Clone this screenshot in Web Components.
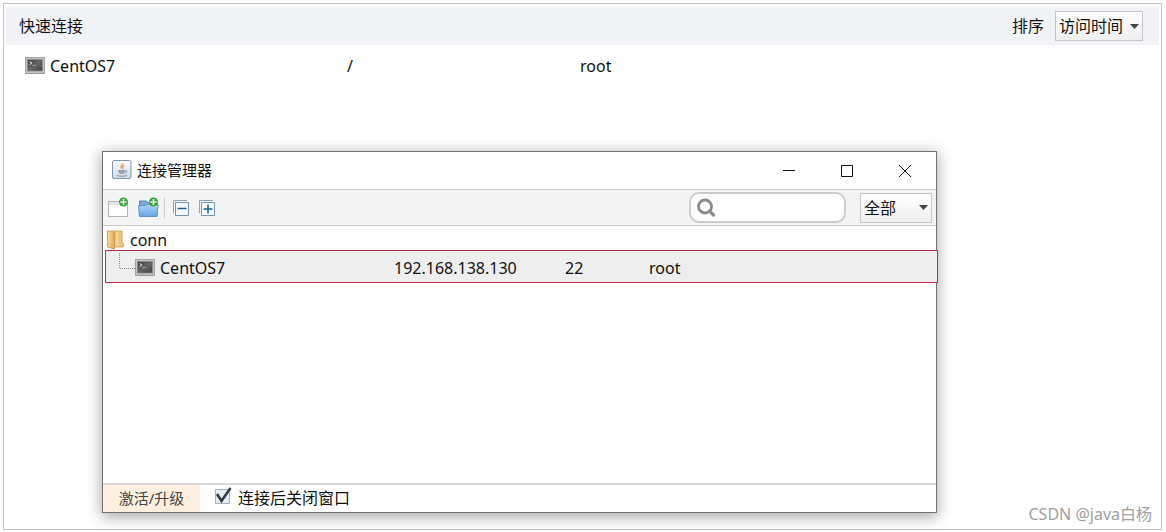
<!DOCTYPE html>
<html lang="zh-CN">
<head>
<meta charset="utf-8">
<title>连接管理器</title>
<style>
html, body { margin: 0; min-height: 100vh; background: #fff; }
body { font: 16px/24px "Noto Sans", "Noto Sans CJK SC", sans-serif; color: #111; display: flex; }
app-desktop { flex: 1; }
</style>
</head>
<body>
<app-desktop>
  <quick-connect></quick-connect>
  <connection-manager slot="window"></connection-manager>
  <span slot="credit">CSDN @java白杨</span>
</app-desktop>
<script>
function define(name, html, setup) {
  const template = document.createElement('template');
  template.innerHTML = html;
  customElements.define(name, class extends HTMLElement {
    constructor() {
      super();
      this.attachShadow({ mode: 'open' }).append(template.content.cloneNode(true));
    }
    connectedCallback() { if (setup) setup(this, this.shadowRoot); }
  });
}

define('terminal-icon', `
<style>:host { display: inline-flex; flex: none; } svg { display: block; }</style>
<svg width="20" height="18" viewBox="0 0 20 18" aria-hidden="true">
  <defs><linearGradient id="g" x1="0" y1="0" x2="1" y2="1"><stop offset="0" stop-color="#3c3c42"/><stop offset=".5" stop-color="#66666b"/><stop offset="1" stop-color="#3c3c41"/></linearGradient></defs>
  <rect x=".5" y=".5" width="19" height="16" fill="#c4c4c4" stroke="#a3a3a3"/>
  <rect x="2.500" y="2.500" width="15" height="11.500" fill="url(#g)" stroke="#8a8a8a" stroke-width=".8"/>
  <path d="M4.500 4.500l2.500 1.500-2.500 1.500" fill="none" stroke="#d8d8d8" stroke-width="1"/><path d="M7.500 8.500h3" stroke="#a4a4a4"/>
  <path d="M1 16.500h18" stroke="#999"/>
</svg>`);

define('java-icon', `
<style>:host { display: inline-flex; flex: none; } svg { display: block; }</style>
<svg width="20" height="20" viewBox="0 0 20 20" aria-hidden="true">
  <defs><linearGradient id="j" x1="0" y1="0" x2="0" y2="1"><stop offset="0" stop-color="#fff"/><stop offset="1" stop-color="#ccdbe6"/></linearGradient></defs>
  <rect x=".5" y=".5" width="18.500" height="18" rx="1.500" fill="url(#j)" stroke="#7e98ac"/>
  <path d="M10.500 3c1 2-3 3-1 5.500M12.500 5.500c-2 1-2.500 2-1.500 3.500" fill="none" stroke="#e0a070" stroke-width="1.400"/>
  <path d="M6 10h7c0 3-1 4-3.500 4S6 12.500 6 10z" fill="#97a5b2"/><path d="M13 10.500c2.500-.5 2.500 2-.5 2.500M5 15.500c3 1 7 1 10 0" fill="none" stroke="#8095a6"/>
</svg>`);

define('drop-select', `
<style>
:host { display: inline-flex; }
select { appearance: none; box-sizing: border-box; width: 100%; height: 30px; margin: 0; padding: 0 16px 0 3px; border: 1px solid #c4c6c9; border-radius: 0; font: inherit; color: inherit;
  background: url("data:image/svg+xml,%3Csvg xmlns='http://www.w3.org/2000/svg' width='9' height='5'%3E%3Cpath d='M0 0h9L4.500 5z' fill='%23444'/%3E%3C/svg%3E") no-repeat right 3px center, linear-gradient(#fff, #eeeff0); }
</style>
<select></select>`, (host, root) => {
  const select = root.querySelector('select');
  select.setAttribute('aria-label', host.getAttribute('label'));
  select.replaceChildren(new Option(host.getAttribute('value')));
});

define('app-desktop', `
<style>
:host { display: flex; flex-direction: column; position: relative; box-sizing: border-box; margin: 3px 4px 2px 3px; padding: 3px 2px; border: 1px solid #c2c2c4; }
main { flex: 1; }
footer { text-align: right; padding-right: 7px; color: #a0a0a0; }
</style>
<main><slot></slot></main>
<slot name="window"></slot>
<footer><slot name="credit"></slot></footer>`);

define('quick-connect', `
<style>
:host { display: block; }
header { display: flex; align-items: center; height: 38px; padding: 0 16px 0 13px; background: #f2f3f7; }
h1 { flex: 1; margin: 0; font: inherit; }
header span { margin-right: 11px; }
drop-select { width: 88px; }
table { width: 100%; margin-top: 6px; table-layout: fixed; border-collapse: collapse; }
td { padding: 0; height: 30px; }
.name { width: 341px; } .path { width: 233px; }
.cell { display: flex; align-items: center; gap: 5px; padding-left: 19px; }
</style>
<header><h1>快速连接</h1><span>排序</span><drop-select label="排序" value="访问时间"></drop-select></header>
<table><tbody><tr><td class="name"><div class="cell"><terminal-icon></terminal-icon>CentOS7</div></td><td class="path">/</td><td>root</td></tr></tbody></table>`);

define('window-title', `
<style>
:host { display: flex; align-items: center; height: 37px; padding: 0 17px 0 9px; gap: 5px; border-bottom: 1px solid #c9c9c9; }
h2 { flex: 1; margin: 0; font: inherit; font-size: 15px; line-height: 22px; padding-bottom: 2px; }
java-icon { padding-bottom: 2px; }
button { width: 28px; height: 28px; padding: 0; border: 0; background: none; display: grid; place-items: center; }
.controls { display: flex; gap: 30px; }
svg { fill: none; stroke: #111; stroke-width: 1; }
</style>
<java-icon></java-icon><h2><slot></slot></h2>
<div class="controls">
<button aria-label="最小化"><svg width="12" height="12"><path d="M0 5.500h12"/></svg></button>
<button aria-label="最大化"><svg width="12" height="12"><path d="M.5.5h11v11H.5z"/></svg></button>
<button aria-label="关闭"><svg width="12" height="12"><path d="M0 0l12 12M12 0L0 12"/></svg></button>
</div>`);

define('window-toolbar', `
<style>
:host { display: flex; align-items: center; height: 35px; padding: 0 4px 0 5px; background: #f4f4f4; border-bottom: 1px solid #c9c9c9; }
button { padding: 0; border: 0; background: none; display: block; }
svg { display: block; }
.add { margin-right: 8px; }
.line { width: 1px; height: 20px; background: #c8c8c8; margin: 0 7px 0 -4px; }
.box { margin-right: 8px; }
.search { display: flex; align-items: center; gap: 4px; box-sizing: border-box; width: 157px; height: 31px; margin-left: auto; margin-right: 14px; padding: 0 6px; border: 2px solid #cdcdcd; border-radius: 10px; background: #fff; }
.search svg { flex: none; }
input { flex: 1; min-width: 0; border: 0; padding: 0; outline: 0; background: none; font: inherit; }
drop-select { width: 72px; }
</style>
<button class="add" aria-label="新建连接"><svg width="22" height="22" viewBox="0 0 22 22"><path d="M.5 4.500h19v15H.5z" fill="#fdfdfd" stroke="#b4b4b4"/><path d="M1 5h18v3H1z" fill="#e6e6e6"/><circle cx="15.500" cy="5" r="4.500" fill="#35a535"/><path d="M15.500 2v6M12.500 5h6" stroke="#fff" stroke-width="1.500"/></svg></button>
<button class="add" aria-label="新建文件夹"><svg width="22" height="22" viewBox="0 0 22 22"><defs><linearGradient id="f" x1="0" y1="0" x2="0" y2="1"><stop offset="0" stop-color="#b0d4f7"/><stop offset="1" stop-color="#65a5e8"/></linearGradient></defs><path d="M1.500 18V4h7l2 2h8.500v12z" fill="#7da9d8" stroke="#4f83b9"/><path d="M.5 8.500h7l2-1h10.500l-1 12h-17.500z" fill="url(#f)" stroke="#5a93cf"/><circle cx="15.500" cy="5" r="4.500" fill="#35a535"/><path d="M15.500 2v6M12.500 5h6" stroke="#fff" stroke-width="1.500"/></svg></button>
<span class="line"></span>
<button class="box" aria-label="全部折叠"><svg width="18" height="18" viewBox="0 0 18 18"><path d="M1.500 14V1.500H15" fill="none" stroke="#8ba3bc"/><path d="M3.500 3.500h13v13h-13z" fill="#f3f9fe" stroke="#7893b0"/><path d="M5.500 9.500h9" stroke="#1c6390" stroke-width="1.500"/></svg></button>
<button class="box" aria-label="全部展开"><svg width="18" height="18" viewBox="0 0 18 18"><path d="M1.500 14V1.500H15" fill="none" stroke="#8ba3bc"/><path d="M3.500 3.500h13v13h-13z" fill="#f3f9fe" stroke="#7893b0"/><path d="M5.500 10h9M10 5.500v9" stroke="#1c6390" stroke-width="1.500"/></svg></button>
<label class="search"><svg width="19" height="20" viewBox="0 0 19 20"><circle cx="8" cy="8.500" r="6.500" fill="none" stroke="#8b8b8b" stroke-width="2.800"/><path d="M12.500 13l5 5" stroke="#8b8b8b" stroke-width="3.200"/></svg><input type="text" aria-label="搜索"></label>
<drop-select label="筛选" value="全部"></drop-select>`);

define('connection-tree', `
<style>
:host { display: block; min-height: 257px; }
.folder { display: flex; align-items: center; gap: 6px; height: 24px; padding: 4px 0 0 4px; box-sizing: border-box; }
.folder svg { display: block; }
.row { display: grid; grid-template-columns: 288px 171px 84px 1fr; align-items: center; box-sizing: border-box; height: 33px; margin: 0 -2px 0 2px; padding-top: 2px; border: 1px solid #b5304d; background: #eeeeef; position: relative; }
.name { display: flex; align-items: center; gap: 5px; padding-left: 13px; }
.name > svg { margin-right: -5px; }
</style>
<div class="folder"><svg width="17" height="20" viewBox="0 0 17 20"><defs><linearGradient id="y"><stop offset="0" stop-color="#f9dc94"/><stop offset="1" stop-color="#dbaa50"/></linearGradient></defs><path d="M5 1h10v12l2 1-1 3H5z" fill="#edc77c" stroke="#c89d50" stroke-width=".8"/><path d="M.5 1h4l3 2v16L.5 17z" fill="url(#y)" stroke="#bf954c" stroke-width=".8"/><path d="M10 2v14" stroke="#f9e3ae"/></svg><span>conn</span></div>
<div class="row"><div class="name"><svg width="16" height="29" viewBox="0 0 16 29"><path d="M.5 0v15.500H16" fill="none" stroke="#8b8b8b" stroke-dasharray="1 1"/></svg><terminal-icon></terminal-icon><span>CentOS7</span></div><span>192.168.138.130</span><span>22</span><span>root</span></div>`);

define('window-footer', `
<style>
:host { display: flex; align-items: stretch; height: 27px; border-top: 2px solid #d8d8d8; }
button { width: 97px; padding: 0 0 2px; border: 0; background: #fdf0df; font: inherit; font-size: 15px; color: #444; }
label { display: flex; align-items: center; gap: 6px; margin-left: 14px; padding-bottom: 2px; }
input { appearance: none; flex: none; width: 18px; height: 20px; margin: 0 0 4px; }
input:checked { background: url("data:image/svg+xml,%3Csvg xmlns='http://www.w3.org/2000/svg' width='18' height='20'%3E%3Cpath d='M1.500 3.500h14v14h-14z' fill='%23e6edf2' stroke='%23a6b1b9'/%3E%3Cpath d='M3 8l4.500 7L16.500 2' fill='none' stroke='%23303e49' stroke-width='2.600'/%3E%3C/svg%3E") no-repeat; }
</style>
<button>激活/升级</button>
<label><input type="checkbox" checked>连接后关闭窗口</label>`);

define('connection-manager', `
<style>
:host { display: block; position: absolute; top: 147px; left: 98px; right: 224px; border: 1px solid #727272; background: #fff; box-shadow: 0 3px 14px 1px #0005; }
</style>
<window-title>连接管理器</window-title>
<window-toolbar></window-toolbar>
<connection-tree></connection-tree>
<window-footer></window-footer>`);
</script>
</body>
</html>
